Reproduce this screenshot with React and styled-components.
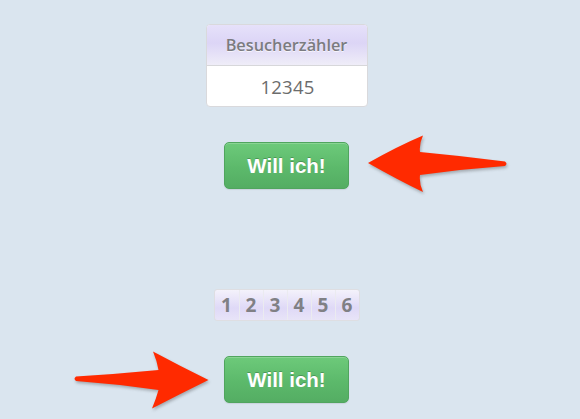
import React from "react";
import styled, { createGlobalStyle } from "styled-components";

const Global = createGlobalStyle`
  html, body {
    margin: 0;
    padding: 0;
    background: #dae5ef;
  }
  body {
    font-family: "Open Sans", "DejaVu Sans", sans-serif;
  }
`;

const Page = styled.div`
  position: relative;
  width: 573px;
  height: 419px;
  display: flex;
  flex-direction: column;
  align-items: center;
  padding-top: 24px;
  box-sizing: border-box;
  overflow: visible;
`;

const Counter = styled.div`
  width: 162px;
  box-sizing: border-box;
  border: 1px solid #d9d9dc;
  border-radius: 4px;
  background: #fff;
  overflow: hidden;
`;

const CounterHead = styled.div`
  height: 40px;
  border-bottom: 1px solid #d7d7da;
  background: linear-gradient(to bottom, #e6e1fa 0%, #dcd5f6 45%, #efedf8 100%);
  display: flex;
  align-items: center;
  justify-content: center;
  font-size: 16.3px;
  font-weight: 600;
  color: #7b7b80;
  text-shadow: 0 1px 0 rgba(255, 255, 255, 0.7);
`;

const CounterValue = styled.div`
  height: 40px;
  display: flex;
  align-items: center;
  justify-content: center;
  padding-left: 2px;
  font-size: 18.5px;
  color: #6c6c6c;
  letter-spacing: 0.2px;
`;

const WantButton = styled.button`
  margin-top: ${(p) => p.$gap}px;
  width: 125px;
  height: 47px;
  box-sizing: border-box;
  border: 1px solid #50a55e;
  border-radius: 5px;
  background: linear-gradient(to bottom, #6dca7a 0%, #5cb96b 55%, #54ad63 100%);
  box-shadow: inset 0 1px 0 rgba(255, 255, 255, 0.2), 0 1px 1px rgba(0, 0, 0, 0.08);
  font-family: "Liberation Sans", Arial, sans-serif;
  font-weight: 700;
  font-size: 20.5px;
  color: #fff;
  text-shadow: 0 -1px 0 rgba(0, 0, 0, 0.22);
  padding: 0;
  cursor: pointer;
`;

const Pager = styled.div`
  margin-top: 100px;
  display: flex;
  box-sizing: border-box;
  height: 32px;
  border: 1px solid #dedee2;
  border-radius: 3px;
  overflow: hidden;
  background: linear-gradient(to bottom, #f4f2fb 0%, #dfd9f7 60%, #e8e4f8 100%);
`;

const PageCell = styled.span`
  width: 24px;
  display: flex;
  align-items: center;
  justify-content: center;
  font-size: 19px;
  font-weight: 700;
  color: #808085;
  border-left: ${(p) => (p.$first ? "none" : "1px solid #ebebf0")};
  box-sizing: border-box;
`;

const Arrow = styled.svg`
  position: absolute;
  left: 0;
  top: 0;
  overflow: visible;
  filter: drop-shadow(1px 2px 1.5px rgba(60, 60, 60, 0.35));
`;

export default function App() {
  return (
    <>
      <Global />
      <Page>
        <Counter>
          <CounterHead>Besucherzähler</CounterHead>
          <CounterValue>12345</CounterValue>
        </Counter>
        <WantButton $gap={35}>Will ich!</WantButton>
        <Pager>
          {[1, 2, 3, 4, 5, 6].map((n, i) => (
            <PageCell key={n} $first={i === 0}>
              {n}
            </PageCell>
          ))}
        </Pager>
        <WantButton $gap={35}>Will ich!</WantButton>

        <Arrow width="580" height="419" viewBox="0 0 580 419">
          <path
            fill="#ff2a00"
            d="M368 163 Q398 146 423 135.5 Q419 144 420 152 Q463 156 505 161.5 Q508 163.8 505 166 Q463 169 420 175 Q419 184 423 192 Q398 180 368 163 Z"
          />
          <path
            fill="#ff2a00"
            d="M208.5 380 Q180 366 153 351.5 Q157 361 158.5 370 Q117 374 76 376.5 Q73 378.8 76 381 Q117 384 158.5 390 Q156 399 152 408.5 Q180 394 208.5 380 Z"
          />
        </Arrow>
      </Page>
    </>
  );
}
